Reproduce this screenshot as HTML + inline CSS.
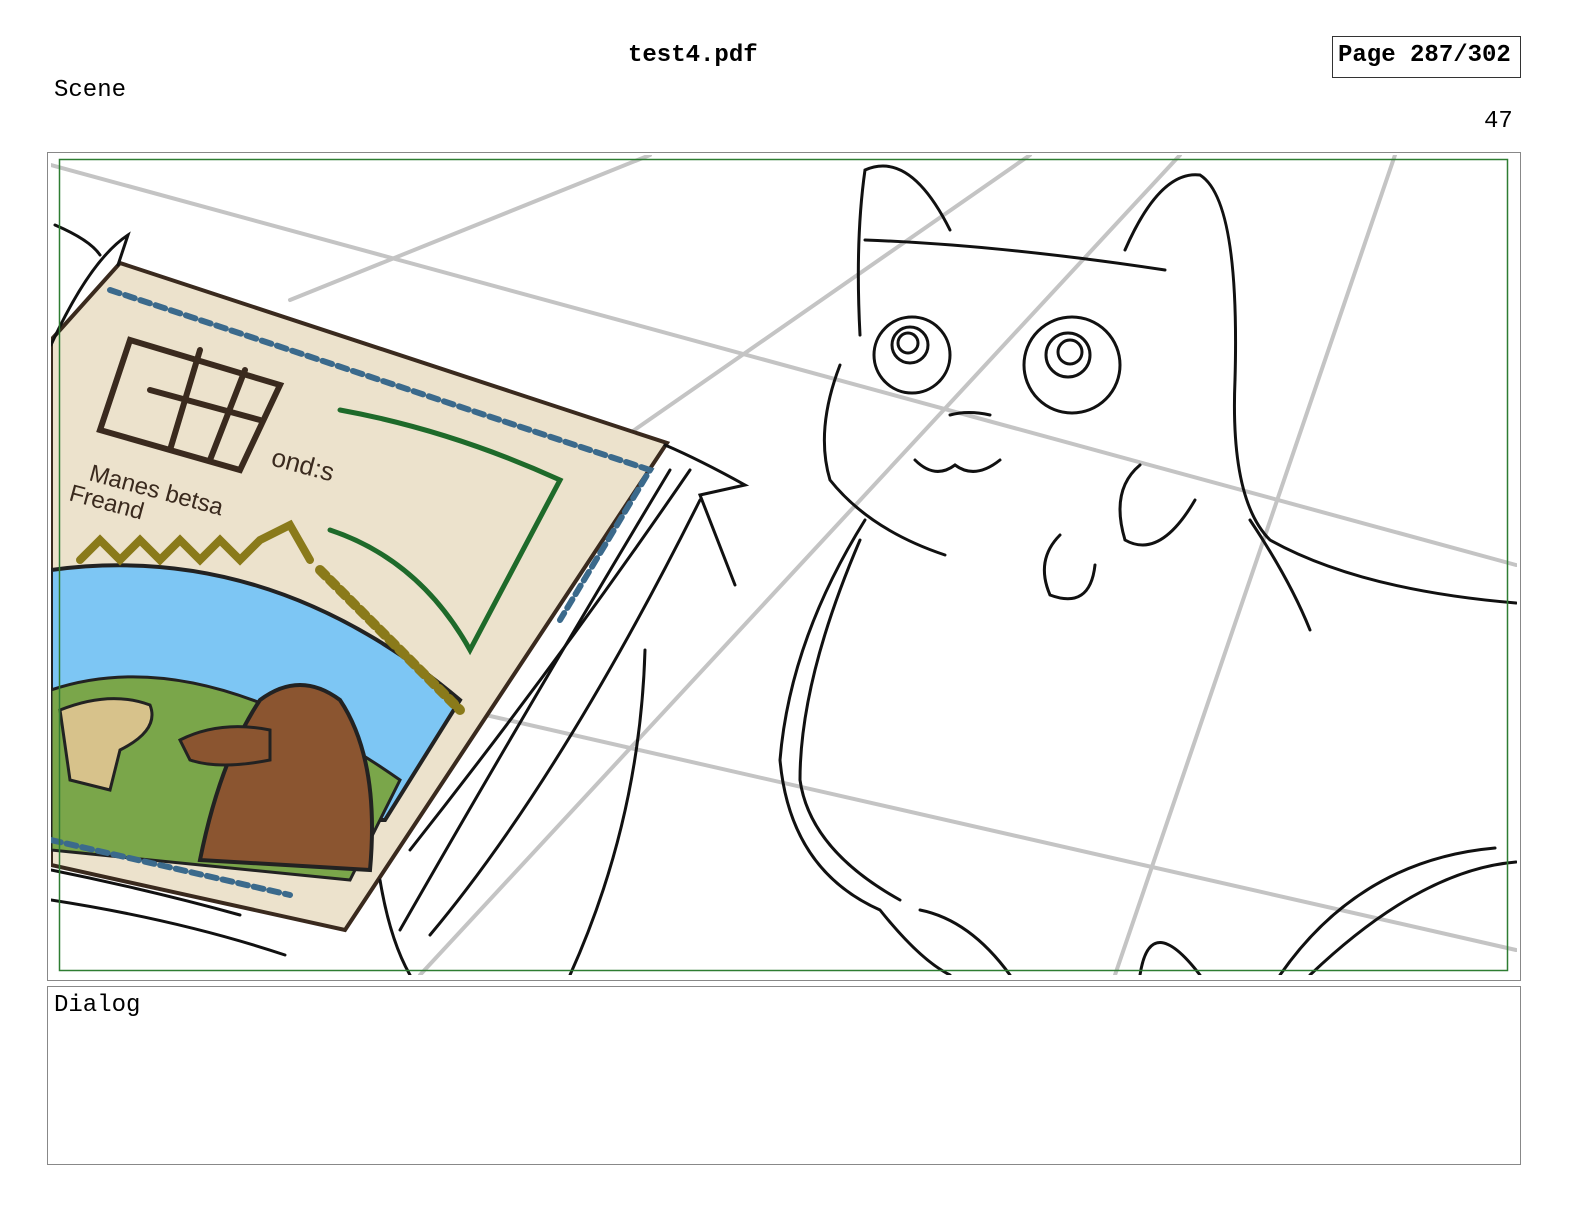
<!DOCTYPE html>
<html><head><meta charset="utf-8"><style>
html,body{margin:0;padding:0}
body{width:1584px;height:1224px;background:#fff;position:relative;overflow:hidden;font-family:"Liberation Mono",monospace}
.t{position:absolute;white-space:nowrap;line-height:24px;font-size:24px}
</style></head><body>
<div class="t" style="left:628px;top:44px;font-weight:bold">test4.pdf</div>
<div style="position:absolute;left:1332px;top:36px;width:187px;height:40px;border:1px solid #333"></div>
<div class="t" style="left:1338px;top:44px;font-weight:bold">Page 287/302</div>
<div class="t" style="left:54px;top:79px">Scene</div>
<div class="t" style="left:1484px;top:110px">47</div>
<div style="position:absolute;left:47px;top:152px;width:1472px;height:827px;border:1px solid #888"></div>
<div style="position:absolute;left:47px;top:986px;width:1472px;height:177px;border:1px solid #888"></div>
<div class="t" style="left:54px;top:994px">Dialog</div>
<svg width="1584" height="1224" style="position:absolute;left:0;top:0">
<defs><clipPath id="c"><rect x="51" y="155" width="1466" height="820"/></clipPath></defs>
<g clip-path="url(#c)" fill="none" stroke-linecap="round">
<g stroke="#c4c4c4" stroke-width="4">
<path d="M51,165 L1516,565"/><path d="M420,700 L1516,950"/><path d="M290,300 L650,155"/><path d="M620,440 L1030,155"/><path d="M420,975 L1180,155"/><path d="M1115,975 L1395,155"/>
</g>
<path d="M120,263 L667,443 L345,930 L51,865 L51,340 Z" fill="#ece2cc" stroke="#3a2a1e" stroke-width="4"/>
<path d="M51,570 Q270,540 460,700 L385,820 L51,820 Z" fill="#7dc6f4" stroke="#222" stroke-width="4"/>
<path d="M51,690 Q200,640 400,780 L350,880 L51,850 Z" fill="#7aa64a" stroke="#222" stroke-width="3"/>
<path d="M200,860 Q220,760 260,700 Q300,670 340,700 Q380,760 370,870 Z" fill="#8b5530" stroke="#222" stroke-width="4"/>
<path d="M180,740 Q220,720 270,730 L270,760 Q220,770 190,760 Z" fill="#8b5530" stroke="#222" stroke-width="3"/>
<path d="M60,710 Q110,690 150,705 Q160,730 120,750 L110,790 L70,780 Z" fill="#d7c28b" stroke="#222" stroke-width="3"/>
<path d="M110,290 L650,470 L560,620" stroke="#3b6a8c" stroke-width="6" stroke-dasharray="10 6"/>
<path d="M51,840 L290,895" stroke="#3b6a8c" stroke-width="6" stroke-dasharray="10 6"/>
<path d="M80,560 L100,540 L120,560 L140,540 L160,560 L180,540 L200,560 L220,540 L240,560 L260,540 L290,525 L310,560" stroke="#8a7a1a" stroke-width="8"/>
<path d="M320,570 L460,710" stroke="#8a7a1a" stroke-width="10" stroke-dasharray="8 6"/>
<path d="M130,340 L280,385 L240,470 L100,430 Z M150,390 L260,420 M200,350 L170,450 M245,370 L210,460" stroke="#3a2a1e" stroke-width="6"/>
<path d="M340,410 Q450,430 560,480 L470,650 Q420,560 330,530" stroke="#1e6a2a" stroke-width="5"/>
<text x="88" y="480" font-family="Liberation Sans" font-size="24" fill="#3a2a1e" transform="rotate(15 88 480)">Manes betsa</text>
<text x="68" y="500" font-family="Liberation Sans" font-size="24" fill="#3a2a1e" transform="rotate(15 68 500)">Freand</text>
<text x="270" y="465" font-family="Liberation Sans" font-size="26" fill="#3a2a1e" transform="rotate(15 270 465)">ond:s</text>
<g stroke="#111" stroke-width="3">
<path d="M55,225 Q90,240 100,255"/><path d="M51,345 Q90,260 128,235 L118,265"/><path d="M665,445 Q700,460 745,485 L700,495 L735,585"/><path d="M690,470 Q560,660 410,850"/><path d="M670,470 Q520,720 400,930"/><path d="M645,650 Q640,820 570,975"/><path d="M430,935 Q560,780 700,500"/><path d="M380,880 Q390,940 410,975"/>
<path d="M51,900 Q180,920 285,955"/><path d="M51,870 Q150,890 240,915"/>
<path d="M860,335 Q855,240 865,170 Q910,150 950,230"/><path d="M865,240 Q1000,245 1165,270"/><path d="M1125,250 Q1160,170 1200,175 Q1240,200 1235,380"/>
<circle cx="912" cy="355" r="38"/><circle cx="910" cy="345" r="18"/><circle cx="908" cy="343" r="10"/><circle cx="1072" cy="365" r="48"/><circle cx="1068" cy="355" r="22"/><circle cx="1070" cy="352" r="12"/>
<path d="M950,415 Q968,410 990,415"/><path d="M915,460 Q935,480 955,465 Q975,480 1000,460"/>
<path d="M840,365 Q815,430 830,480 Q870,530 945,555"/><path d="M1140,465 Q1110,490 1125,540 Q1160,560 1195,500"/><path d="M1060,535 Q1035,560 1050,595 Q1090,610 1095,565"/>
<path d="M1235,380 Q1230,500 1270,540 Q1360,590 1516,603"/><path d="M1250,520 Q1290,580 1310,630"/>
<path d="M865,520 Q790,640 780,760 Q790,870 880,910 Q920,960 950,975"/><path d="M860,540 Q800,680 800,780 Q810,850 900,900"/><path d="M920,910 Q970,920 1010,975"/>
<path d="M1140,975 Q1150,910 1200,975"/><path d="M1280,975 Q1360,860 1495,848"/><path d="M1310,975 Q1420,870 1516,862"/>
</g>
</g>
<rect x="59.5" y="159.5" width="1448" height="811" fill="none" stroke="#2e7d32" stroke-width="1.5"/>
</svg>
</body></html>
